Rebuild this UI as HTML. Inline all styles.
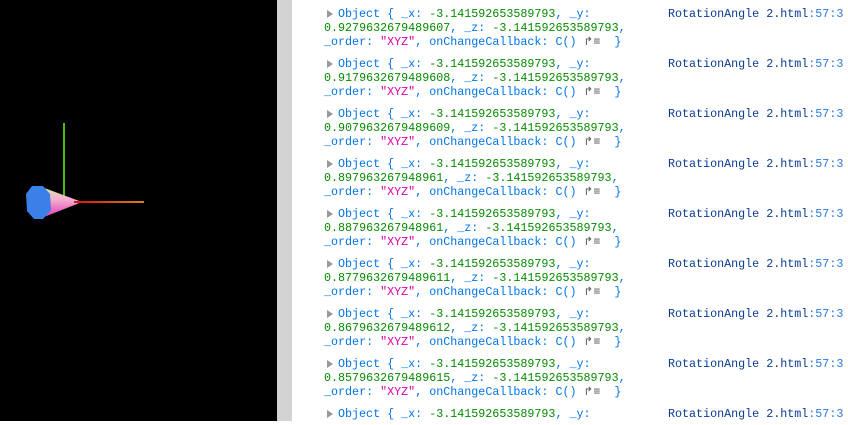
<!DOCTYPE html>
<html><head><style>
body{margin:0;width:848px;height:421px;overflow:hidden;background:#fff;position:relative;font-family:"Liberation Mono",monospace;font-size:11.7px}
#l{position:absolute;left:0;top:0;width:277px;height:421px;background:#000}
#s{position:absolute;left:277px;top:0;width:15px;height:421px;background:#d3d3d3}
.e{position:absolute;left:324px;width:340px;color:#0074e8}
.e div{height:14px;line-height:14px;white-space:pre}
.t{display:inline-block;width:0;height:0;border-left:6px solid #999;border-top:4.5px solid transparent;border-bottom:4.5px solid transparent;margin:0 5px 0 3px;vertical-align:-1px}
.n{color:#058b00}.s{color:#dd00a9}.p{color:#555}
.src{position:absolute;left:668px;color:#0a3d91;white-space:pre;line-height:14px;height:14px}
.src b{font-weight:normal;color:#2a7ae2}
</style></head><body>
<div id="l">
<svg width="277" height="421">
<defs><linearGradient id="g" x1="0" y1="0" x2="0" y2="1"><stop offset="0" stop-color="#d8f0a0"/><stop offset=".4" stop-color="#f5b0d0"/><stop offset="1" stop-color="#e030b0"/></linearGradient>
<linearGradient id="r" gradientUnits="userSpaceOnUse" x1="74" y1="0" x2="144" y2="0"><stop offset="0" stop-color="#e01010"/><stop offset="1" stop-color="#d08020"/></linearGradient></defs>
<line x1="64" y1="123" x2="64" y2="196" stroke="#40c010" stroke-width="2"/>
<polygon points="39,186 82,202 39,219" fill="url(#g)"/>
<rect x="74" y="201" width="70" height="2" fill="url(#r)"/>
<polygon points="32,186 43,186 50,194 51,210 43,219 34,219 27,211 26,194" fill="#3a80e8"/>
</svg></div>
<div id="s"></div>

<div class="e" style="top:7px"><div><span class="t"></span>Object { _x: <span class="n">-3.141592653589793</span>, _y:</div><div><span class="n">0.9279632679489607</span>, _z: <span class="n">-3.141592653589793</span>,</div><div>_order: <span class="s">"XYZ"</span>, onChangeCallback: C() <span class="p">↱≡</span>  }</div></div>
<div class="src" style="top:7px">RotationAngle 2.html<b>:57:3</b></div>

<div class="e" style="top:57px"><div><span class="t"></span>Object { _x: <span class="n">-3.141592653589793</span>, _y:</div><div><span class="n">0.9179632679489608</span>, _z: <span class="n">-3.141592653589793</span>,</div><div>_order: <span class="s">"XYZ"</span>, onChangeCallback: C() <span class="p">↱≡</span>  }</div></div>
<div class="src" style="top:57px">RotationAngle 2.html<b>:57:3</b></div>

<div class="e" style="top:107px"><div><span class="t"></span>Object { _x: <span class="n">-3.141592653589793</span>, _y:</div><div><span class="n">0.9079632679489609</span>, _z: <span class="n">-3.141592653589793</span>,</div><div>_order: <span class="s">"XYZ"</span>, onChangeCallback: C() <span class="p">↱≡</span>  }</div></div>
<div class="src" style="top:107px">RotationAngle 2.html<b>:57:3</b></div>

<div class="e" style="top:157px"><div><span class="t"></span>Object { _x: <span class="n">-3.141592653589793</span>, _y:</div><div><span class="n">0.897963267948961</span>, _z: <span class="n">-3.141592653589793</span>,</div><div>_order: <span class="s">"XYZ"</span>, onChangeCallback: C() <span class="p">↱≡</span>  }</div></div>
<div class="src" style="top:157px">RotationAngle 2.html<b>:57:3</b></div>

<div class="e" style="top:207px"><div><span class="t"></span>Object { _x: <span class="n">-3.141592653589793</span>, _y:</div><div><span class="n">0.887963267948961</span>, _z: <span class="n">-3.141592653589793</span>,</div><div>_order: <span class="s">"XYZ"</span>, onChangeCallback: C() <span class="p">↱≡</span>  }</div></div>
<div class="src" style="top:207px">RotationAngle 2.html<b>:57:3</b></div>

<div class="e" style="top:257px"><div><span class="t"></span>Object { _x: <span class="n">-3.141592653589793</span>, _y:</div><div><span class="n">0.8779632679489611</span>, _z: <span class="n">-3.141592653589793</span>,</div><div>_order: <span class="s">"XYZ"</span>, onChangeCallback: C() <span class="p">↱≡</span>  }</div></div>
<div class="src" style="top:257px">RotationAngle 2.html<b>:57:3</b></div>

<div class="e" style="top:307px"><div><span class="t"></span>Object { _x: <span class="n">-3.141592653589793</span>, _y:</div><div><span class="n">0.8679632679489612</span>, _z: <span class="n">-3.141592653589793</span>,</div><div>_order: <span class="s">"XYZ"</span>, onChangeCallback: C() <span class="p">↱≡</span>  }</div></div>
<div class="src" style="top:307px">RotationAngle 2.html<b>:57:3</b></div>

<div class="e" style="top:357px"><div><span class="t"></span>Object { _x: <span class="n">-3.141592653589793</span>, _y:</div><div><span class="n">0.8579632679489615</span>, _z: <span class="n">-3.141592653589793</span>,</div><div>_order: <span class="s">"XYZ"</span>, onChangeCallback: C() <span class="p">↱≡</span>  }</div></div>
<div class="src" style="top:357px">RotationAngle 2.html<b>:57:3</b></div>

<div class="e" style="top:407px"><div><span class="t"></span>Object { _x: <span class="n">-3.141592653589793</span>, _y:</div></div>
<div class="src" style="top:407px">RotationAngle 2.html<b>:57:3</b></div>
</body></html>
